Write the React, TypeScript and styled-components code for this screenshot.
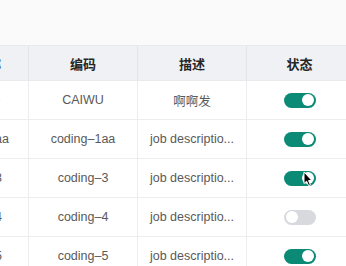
import React from "react";
import styled, { createGlobalStyle } from "styled-components";

const Global = createGlobalStyle`
  html, body { margin: 0; padding: 0; background: #ffffff; }
  body { font-family: "Liberation Sans", "Noto Sans CJK SC", sans-serif; }
`;

const Page = styled.div`
  width: 346px;
  height: 266px;
  overflow: hidden;
  background: #ffffff;
  display: flex;
  flex-direction: column;
`;

const TopBar = styled.div`
  height: 45px;
  flex: none;
  background: #fafafa;
`;

const TableViewport = styled.div`
  overflow: hidden;
  flex: 1;
`;

const Table = styled.div`
  display: grid;
  grid-template-columns: 81px 109px 109px 106px;
  margin-left: -52px;
  width: max-content;
`;

const HeadCell = styled.div`
  height: 34px;
  display: flex;
  align-items: center;
  justify-content: center;
  background: #f0f1f5;
  border-top: 1px solid #e9eaee;
  border-bottom: 1px solid #e9eaee;
  border-right: 1px solid #e4e5ea;
  font-family: "Noto Sans CJK SC", "Noto Sans", sans-serif;
  font-size: 13px;
  font-weight: 700;
  color: #262626;
`;

const Cell = styled.div`
  position: relative;
  height: 38px;
  display: flex;
  align-items: center;
  justify-content: center;
  border-bottom: 1px solid #ededf0;
  border-right: 1px solid #ededf0;
  font-size: 12.5px;
  color: #595959;
  white-space: nowrap;
  overflow: hidden;
`;

const Switch = styled.div<{ $on: boolean }>`
  width: 32px;
  height: 15px;
  border-radius: 8px;
  background: ${(p) => (p.$on ? "#0b8a75" : "#d8d9de")};
  display: flex;
  align-items: center;
  justify-content: ${(p) => (p.$on ? "flex-end" : "flex-start")};
  padding: 0 2px;
  box-sizing: border-box;
`;

const Knob = styled.div`
  width: 12px;
  height: 12px;
  border-radius: 50%;
  background: #ffffff;
`;

const Cursor = styled.svg`
  position: absolute;
  left: 56px;
  top: 12px;
  width: 10px;
  height: 16px;
`;

type Row = { name: string; code: string; desc: string; on: boolean; cursor?: boolean };

const rows: Row[] = [
  { name: "财务", code: "CAIWU", desc: "啊啊发", on: true },
  { name: "job-1aa", code: "coding–1aa", desc: "job descriptio...", on: true },
  { name: "job-3", code: "coding–3", desc: "job descriptio...", on: true, cursor: true },
  { name: "job-4", code: "coding–4", desc: "job descriptio...", on: false },
  { name: "job-5", code: "coding–5", desc: "job descriptio...", on: true },
];

export default function App() {
  return (
    <Page>
      <Global />
      <TopBar />
      <TableViewport>
        <Table>
          <HeadCell>名称</HeadCell>
          <HeadCell>编码</HeadCell>
          <HeadCell>描述</HeadCell>
          <HeadCell>状态</HeadCell>
          {rows.map((r) => (
            <React.Fragment key={r.code}>
              <Cell>{r.name}</Cell>
              <Cell>{r.code}</Cell>
              <Cell>{r.desc}</Cell>
              <Cell>
                <Switch $on={r.on}>
                  <Knob />
                </Switch>
                {r.cursor && (
                  <Cursor viewBox="0 0 10 16">
                    <path d="M1 1 L1 12.5 L3.6 10.2 L5.6 14.6 L7.4 13.8 L5.5 9.6 L8.8 9.4 Z" fill="#000" stroke="#fff" strokeWidth="1" strokeLinejoin="round" />
                  </Cursor>
                )}
              </Cell>
            </React.Fragment>
          ))}
        </Table>
      </TableViewport>
    </Page>
  );
}
